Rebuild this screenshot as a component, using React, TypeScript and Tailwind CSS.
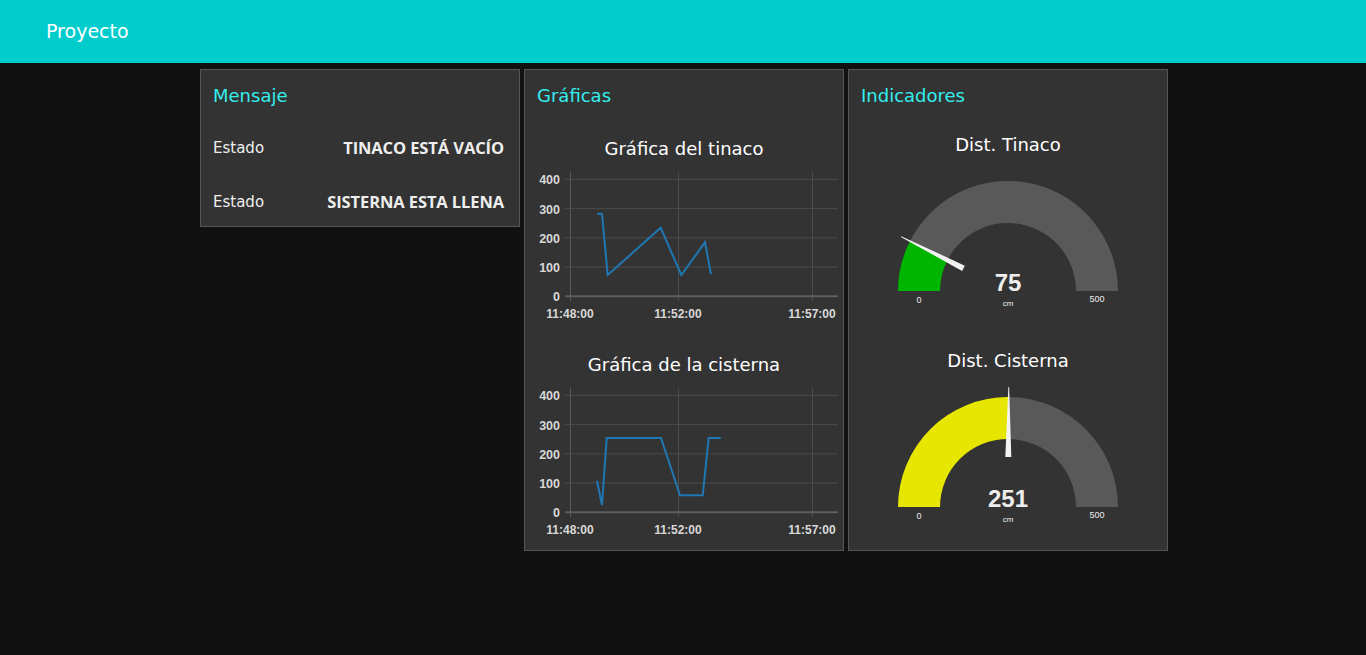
import React from "react";

type Pt = [number, number];

const chart1: Pt[] = [
  [72, 51.7],
  [77, 51.7],
  [82.7, 113],
  [135.7, 65.7],
  [156.3, 113],
  [180, 80.3],
  [186, 112.3],
];

const chart2: Pt[] = [
  [72, 102.7],
  [77, 127],
  [81.7, 60],
  [136, 60],
  [155, 117.3],
  [177.7, 117.3],
  [183.7, 60],
  [195.7, 60],
];

const gridY = [17.3, 46.6, 75.8, 105, 134.3];
const yLabels = ["400", "300", "200", "100", "0"];
const gridX = [45, 153, 287];
const xLabels = ["11:48:00", "11:52:00", "11:57:00"];

function Chart({ title, data }: { title: string; data: Pt[] }) {
  return (
    <div className="flex flex-col">
      <div className="h-[28px] flex items-center justify-center text-[18px] text-white font-['DejaVu_Sans',sans-serif]">
        {title}
      </div>
      <svg width={318} height={160} className="block">
        {gridX.map((x, i) => (
          <line
            key={"vx" + i}
            x1={x + 0.5}
            x2={x + 0.5}
            y1={10}
            y2={139}
            stroke={i === 0 ? "#5a5a5a" : "#4c4c4c"}
            strokeWidth={1}
          />
        ))}
        {gridY.map((y, i) => (
          <line
            key={"hy" + i}
            x1={40}
            x2={313}
            y1={y}
            y2={y}
            stroke={i === 4 ? "#5e5e5e" : "#4c4c4c"}
            strokeWidth={i === 4 ? 2 : 1}
          />
        ))}
        {yLabels.map((l, i) => (
          <text
            key={"yl" + i}
            x={35}
            y={gridY[i] + 5}
            textAnchor="end"
            fontSize={12.5}
            fontWeight={700}
            fill="#d8d8d8"
            fontFamily="'Liberation Sans', Arial, sans-serif"
          >
            {l}
          </text>
        ))}
        {xLabels.map((l, i) => (
          <text
            key={"xl" + i}
            x={gridX[i]}
            y={155.5}
            textAnchor="middle"
            fontSize={12}
            fontWeight={700}
            fill="#d8d8d8"
            fontFamily="'Liberation Sans', Arial, sans-serif"
          >
            {l}
          </text>
        ))}
        <polyline
          points={data.map((p) => p.join(",")).join(" ")}
          fill="none"
          stroke="#1f77b4"
          strokeWidth={2}
          strokeLinejoin="miter"
        />
      </svg>
    </div>
  );
}

const CX = 159;
const CY = 133;
const R = 110;
const r = 68;

function pt(rad: number, deg: number): Pt {
  const a = (deg * Math.PI) / 180;
  return [CX - rad * Math.cos(a), CY - rad * Math.sin(a)];
}

function arcPath(a: number, b: number) {
  const o1 = pt(R, a);
  const o2 = pt(R, b);
  const i2 = pt(r, b);
  const i1 = pt(r, a);
  return `M ${o1[0]} ${o1[1]} A ${R} ${R} 0 0 1 ${o2[0]} ${o2[1]} L ${i2[0]} ${i2[1]} A ${r} ${r} 0 0 0 ${i1[0]} ${i1[1]} Z`;
}

function Gauge({
  title,
  value,
  color,
}: {
  title: string;
  value: number;
  color: string;
}) {
  const deg = (value / 500) * 180;
  const a = (deg * Math.PI) / 180;
  const dx = -Math.cos(a);
  const dy = -Math.sin(a);
  const px = -dy;
  const py = dx;
  const tip: Pt = [CX + dx * 120, CY + dy * 120];
  const baseC: Pt = [CX + dx * 50, CY + dy * 50];
  const w = 3;
  const needle = [
    [tip[0] + px * 0.4, tip[1] + py * 0.4],
    [tip[0] - px * 0.4, tip[1] - py * 0.4],
    [baseC[0] - px * w, baseC[1] - py * w],
    [baseC[0] + px * w, baseC[1] + py * w],
  ]
    .map((p) => p.join(","))
    .join(" ");
  return (
    <div className="flex flex-col">
      <div className="h-[28px] flex items-center justify-center text-[18px] text-white font-['DejaVu_Sans',sans-serif]">
        {title}
      </div>
      <svg width={318} height={160} className="block">
        <path d={arcPath(0, deg)} fill={color} />
        <path d={arcPath(deg, 180)} fill="#595959" />
        <polygon points={needle} fill="#f2f2f2" />
        <text
          x={CX}
          y={CY}
          textAnchor="middle"
          fontSize={24}
          fontWeight={700}
          fill="#eeeeee"
          fontFamily="'Liberation Sans', Arial, sans-serif"
        >
          {value}
        </text>
        <text
          x={CX}
          y={CY + 15}
          textAnchor="middle"
          fontSize={8}
          fill="#eeeeee"
          fontFamily="'Liberation Sans', Arial, sans-serif"
        >
          cm
        </text>
        <text
          x={70}
          y={CY + 12}
          textAnchor="middle"
          fontSize={9}
          fill="#eeeeee"
          fontFamily="'Liberation Sans', Arial, sans-serif"
        >
          0
        </text>
        <text
          x={248}
          y={CY + 11}
          textAnchor="middle"
          fontSize={9}
          fill="#eeeeee"
          fontFamily="'Liberation Sans', Arial, sans-serif"
        >
          500
        </text>
      </svg>
    </div>
  );
}

function CardTitle({ children }: { children: React.ReactNode }) {
  return (
    <div className="h-[50px] flex items-center px-[12px] text-[18px] text-[#33eeee] font-['DejaVu_Sans',sans-serif]">
      {children}
    </div>
  );
}

export default function App() {
  return (
    <div className="w-[1366px] h-[655px] bg-[#111111] flex flex-col overflow-hidden">
      <div className="h-[63px] shrink-0 bg-[#00cccc] flex items-center pl-[46px] text-white text-[19px] font-['DejaVu_Sans',sans-serif]">
        Proyecto
      </div>
      <div className="flex items-start gap-[4px] pl-[200px] pt-[6px]">
        <div className="w-[320px] bg-[#333333] border border-[#555555]">
          <CardTitle>Mensaje</CardTitle>
          <div className="mt-[4px] h-[48px] flex items-center justify-between pl-[12px] pr-[15px]">
            <span className="text-[15px] text-[#eeeeee] font-['DejaVu_Sans',sans-serif]">
              Estado
            </span>
            <span className="text-[16.5px] font-bold text-[#eeeeee] tracking-[-0.1px] font-['Open_Sans',sans-serif]">
              TINACO ESTÁ VACÍO
            </span>
          </div>
          <div className="mt-[6px] h-[48px] flex items-center justify-between pl-[12px] pr-[15px]">
            <span className="text-[15px] text-[#eeeeee] font-['DejaVu_Sans',sans-serif]">
              Estado
            </span>
            <span className="text-[16.5px] font-bold text-[#eeeeee] tracking-[-0.1px] font-['Open_Sans',sans-serif]">
              SISTERNA ESTA LLENA
            </span>
          </div>
        </div>
        <div className="w-[320px] bg-[#333333] border border-[#555555] pb-[12px]">
          <CardTitle>Gráficas</CardTitle>
          <div className="mt-[14px] flex flex-col gap-[28px]">
            <Chart title="Gráfica del tinaco" data={chart1} />
            <Chart title="Gráfica de la cisterna" data={chart2} />
          </div>
        </div>
        <div className="w-[320px] bg-[#333333] border border-[#555555] pb-[16px]">
          <CardTitle>Indicadores</CardTitle>
          <div className="mt-[10px] flex flex-col gap-[28px]">
            <Gauge title="Dist. Tinaco" value={75} color="#00b500" />
            <Gauge title="Dist. Cisterna" value={251} color="#e6e600" />
          </div>
        </div>
      </div>
    </div>
  );
}
